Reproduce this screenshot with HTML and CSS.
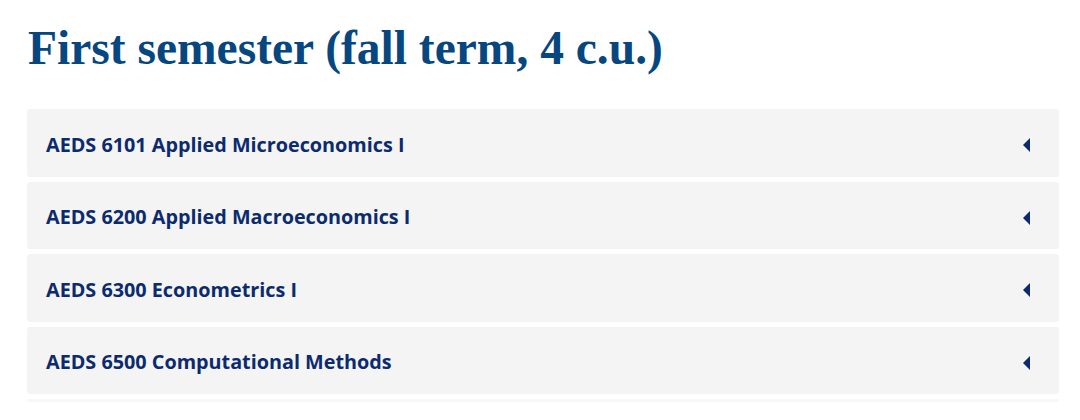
FILE: index.html
```html
<!DOCTYPE html>
<html lang="en">
<head>
  <meta charset="utf-8">
  <title>First semester</title>
  <link rel="stylesheet" href="styles.css">
</head>
<body>
  <main class="semester">
    <h2 class="semester-title">First semester (fall term, 4 c.u.)</h2>

    <div class="course-list">
      <div class="course">
        <span class="course-name">AEDS 6101 Applied Microeconomics I</span>
        <span class="toggle"></span>
      </div>
      <div class="course">
        <span class="course-name">AEDS 6200 Applied Macroeconomics I</span>
        <span class="toggle"></span>
      </div>
      <div class="course">
        <span class="course-name">AEDS 6300 Econometrics I</span>
        <span class="toggle"></span>
      </div>
      <div class="course">
        <span class="course-name">AEDS 6500 Computational Methods</span>
        <span class="toggle"></span>
      </div>
      <div class="course course-more"></div>
    </div>
  </main>
</body>
</html>
```

FILE: styles.css
```css
body {
  margin: 0;
  background: #ffffff;
}

.semester {
  padding: 0 21px 0 27px;
}

.semester-title {
  margin: 0;
  padding: 20px 0 0 1px;
  height: 109px;
  box-sizing: border-box;
  font-family: "Liberation Serif", "Times New Roman", serif;
  font-size: 47.5px;
  line-height: 56px;
  font-weight: bold;
  color: #07477f;
}

.course-list {
  display: flex;
  flex-direction: column;
  gap: 5px;
}

.course {
  display: flex;
  align-items: center;
  justify-content: space-between;
  height: 67.5px;
  padding: 0 29px 0 19px;
  background: #f4f4f4;
  border-radius: 3px;
}

.course-name {
  padding-top: 3px;
  font-family: "Open Sans", sans-serif;
  font-size: 19.8px;
  font-weight: bold;
  color: #0b2b6e;
}

.toggle {
  width: 0;
  height: 0;
  margin-top: 5px;
  border-top: 7px solid transparent;
  border-bottom: 7px solid transparent;
  border-right: 7.5px solid #0b2b6e;
}

.course-more {
  height: 3px;
  background: #f8f8f8;
}
```
